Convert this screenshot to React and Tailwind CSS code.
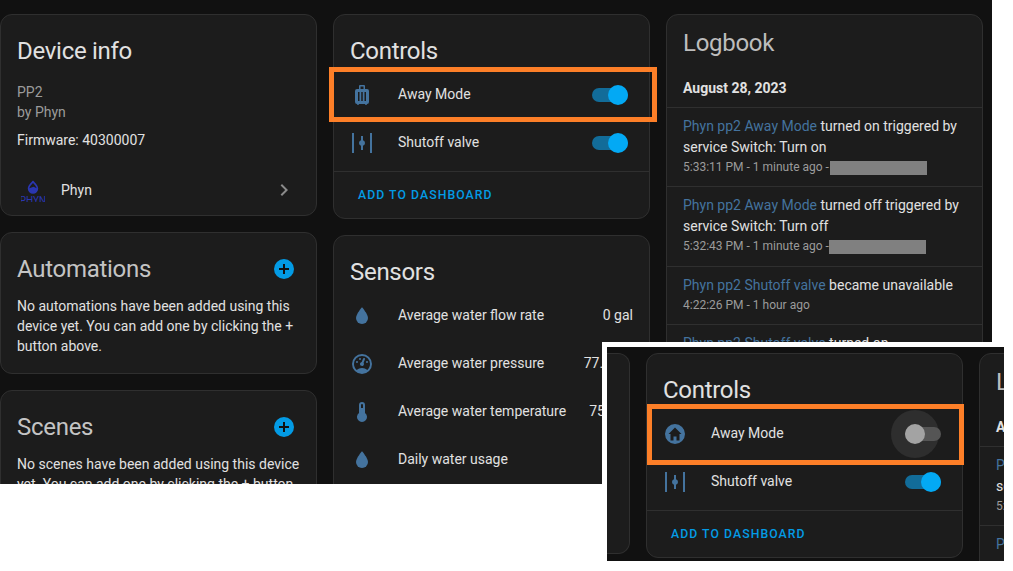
const P = {
  suitcase: "M17,6H15V3A1,1 0 0,0 14,2H10A1,1 0 0,0 9,3V6H7A2,2 0 0,0 5,8V19A2,2 0 0,0 7,21A1,1 0 0,0 8,22A1,1 0 0,0 9,21H15A1,1 0 0,0 16,22A1,1 0 0,0 17,21A2,2 0 0,0 19,19V8A2,2 0 0,0 17,6M9.5,18H8V9H9.5V18M12.75,18H11.25V9H12.75V18M16,18H14.5V9H16V18M13.5,6H10.5V3.5H13.5V6Z",
  valve: "M2,2H4V22H2V2M20,2H22V22H20V2M11,5H13V9.17A3,3 0 0,1 13,14.83V19H11V14.83A3,3 0 0,1 11,9.17V5Z",
  water: "M12,20A6,6 0 0,1 6,14C6,10 12,3.25 12,3.25C12,3.25 18,10 18,14A6,6 0 0,1 12,20Z",
  gauge: "M12,2A10,10 0 0,0 2,12A10,10 0 0,0 12,22A10,10 0 0,0 22,12A10,10 0 0,0 12,2M12,4A8,8 0 0,1 20,12C20,14.4 19,16.5 17.3,18C15.9,16.7 14,16 12,16C10,16 8.2,16.7 6.7,18C5,16.5 4,14.4 4,12A8,8 0 0,1 12,4M14,5.89C13.62,5.9 13.26,6.15 13.1,6.54L11.81,9.77L11.71,10C11,10.13 10.41,10.6 10.14,11.26C9.73,12.29 10.23,13.45 11.26,13.86C12.29,14.27 13.45,13.77 13.86,12.74C14.12,12.08 14,11.32 13.57,10.76L13.67,10.5L14.96,7.29L14.97,7.26C15.17,6.75 14.92,6.17 14.41,5.96C14.28,5.91 14.15,5.89 14,5.89M10,6A1,1 0 0,0 9,7A1,1 0 0,0 10,8A1,1 0 0,0 11,7A1,1 0 0,0 10,6M7,9A1,1 0 0,0 6,10A1,1 0 0,0 7,11A1,1 0 0,0 8,10A1,1 0 0,0 7,9M17,9A1,1 0 0,0 16,10A1,1 0 0,0 17,11A1,1 0 0,0 18,10A1,1 0 0,0 17,9Z",
  thermometer: "M15 13V5A3 3 0 0 0 9 5V13A5 5 0 1 0 15 13M12 4A1 1 0 0 1 13 5V8H11V5A1 1 0 0 1 12 4Z",
  home: "M12,2A10,10 0 0,0 2,12A10,10 0 0,0 12,22A10,10 0 0,0 22,12A10,10 0 0,0 12,2M12,5.5L18.5,12H16.5V18.5H13.5V14.5H10.5V18.5H7.5V12H5.5L12,5.5Z",
};

function Icon({ d }) {
  return (
    <svg viewBox="0 0 24 24" className="w-6 h-6 shrink-0 fill-[#44739e]">
      <path d={d} fillRule="evenodd" />
    </svg>
  );
}

function Card({ className = "", children }) {
  return (
    <div className={"w-[317px] shrink-0 rounded-xl border border-[#2f2f2f] bg-[#1c1c1c] overflow-hidden " + className}>
      {children}
    </div>
  );
}

function Toggle({ on }) {
  if (on) {
    return (
      <div className="relative w-9 h-5 mr-[5px] shrink-0 flex items-center">
        <div className="w-full h-[14px] rounded-full bg-[#126c99]" />
        <div className="absolute right-0 top-0 w-5 h-5 rounded-full bg-[#03a9f4]" />
      </div>
    );
  }
  return (
    <div className="relative w-9 h-5 mr-[5px] shrink-0 flex items-center">
      <div className="absolute -left-[14px] -top-[14px] w-12 h-12 rounded-full bg-[#2e2e2e]" />
      <div className="relative w-full h-[14px] rounded-full bg-[#555555]" />
      <div className="absolute left-0 top-0 w-5 h-5 rounded-full bg-[#a3a3a3]" />
    </div>
  );
}

function Row({ icon, label, children }) {
  return (
    <div className="h-12 px-4 flex items-center">
      <Icon d={icon} />
      <span className="ml-6 pb-[2px] flex-1 text-[14px] text-[#e1e1e1] whitespace-nowrap">{label}</span>
      {children}
    </div>
  );
}

function Value({ children }) {
  return <span className="pb-[2px] text-[14px] text-[#e1e1e1] whitespace-nowrap">{children}</span>;
}

function Title({ children, className = "" }) {
  return <h2 className={"text-[24px] leading-8 font-normal tracking-[-0.012em] " + className}>{children}</h2>;
}

function Controls({ awayOn, awayIcon }) {
  return (
    <Card className="h-[205px]">
      <div className="pt-5 px-4 pb-1">
        <Title className="text-[#e1e1e1]">Controls</Title>
      </div>
      <Row icon={awayIcon} label="Away Mode"><Toggle on={awayOn} /></Row>
      <Row icon={P.valve} label="Shutoff valve"><Toggle on /></Row>
      <div className="mt-1 border-t border-[#2f2f2f] h-12 pl-6 flex items-center text-[12.25px] font-medium tracking-[1.06px] text-[#039be5]">
        ADD TO DASHBOARD
      </div>
    </Card>
  );
}

function Entry({ name, text, time, redact, pad = "pb-[9px]" }) {
  return (
    <div className={"px-4 pt-2 border-b border-[#2f2f2f] " + pad}>
      <p className="text-[14px] leading-[21px] text-[#e1e1e1]">
        <span className="text-[#44739e]">{name}</span> {text}
      </p>
      {time && (
        <p className="text-[12px] leading-[19px] text-[#9b9b9b] flex items-center whitespace-nowrap">
          {time}
          {redact && <span className={"h-[14px] bg-[#808080] " + redact} />}
        </p>
      )}
    </div>
  );
}

function Logbook() {
  return (
    <Card className="h-[600px]">
      <div className="pt-3 px-4">
        <Title className="text-[#bdbdbd]">Logbook</Title>
      </div>
      <div className="mt-[19px] px-4 pb-[9px] border-b border-[#2f2f2f] text-[14px] leading-5 font-bold text-[#e1e1e1]">
        August 28, 2023
      </div>
      <Entry
        name="Phyn pp2 Away Mode"
        text="turned on triggered by service Switch: Turn on"
        time="5:33:11 PM - 1 minute ago -"
        redact="w-[97px] ml-[1px]"
      />
      <Entry
        name="Phyn pp2 Away Mode"
        text="turned off triggered by service Switch: Turn off"
        time="5:32:43 PM - 1 minute ago -"
        redact="w-[97px]"
        pad="pb-[10px]"
      />
      <Entry name="Phyn pp2 Shutoff valve" text="became unavailable" time="4:22:26 PM - 1 hour ago" />
      <Entry name="Phyn pp2 Shutoff valve" text="turned on" />
    </Card>
  );
}

function Plus() {
  return (
    <svg viewBox="0 0 20 20" className="w-5 h-5 shrink-0">
      <circle cx="10" cy="10" r="10" fill="#039be5" />
      <path d="M9 5h2v4h4v2h-4v4H9v-4H5V9h4z" fill="#111111" />
    </svg>
  );
}

function Listing({ title, children, className = "" }) {
  return (
    <Card className={className}>
      <div className="pt-5 pl-4 pr-[22px] flex items-center justify-between">
        <Title className="text-[#c4c4c4]">{title}</Title>
        <Plus />
      </div>
      <p className="mt-[11px] px-4 text-[14px] leading-5 text-[#e1e1e1]">{children}</p>
    </Card>
  );
}

function Logo() {
  return (
    <div className="w-6 h-6 mr-4 overflow-hidden flex flex-col items-center shrink-0">
      <svg viewBox="0 0 12 14" className="w-3 h-[14px] shrink-0 mt-[2px]">
        <path
          d="M6 .5C6 .5 .8 5.2 .8 8.5A5.2 5.2 0 0 0 11.2 8.5C11.2 5.2 6 .5 6 .5ZM6 3C7.4 4.3 9.4 6.6 9.6 8.3L6.6 6.7L2.4 8.3C2.6 6.6 4.6 4.3 6 3Z"
          fill="#2a36b1"
          fillRule="evenodd"
        />
      </svg>
      <span className="text-[10px] leading-[10px] mt-[2px] text-[#2a36b1] whitespace-nowrap">PHYN</span>
    </div>
  );
}

export default function App() {
  return (
    <div className="relative w-[1013px] h-[571px] overflow-hidden bg-white font-['Roboto',sans-serif]">
      <div className="relative w-[992px] h-[484px] overflow-hidden bg-[#111111] pt-[14px] flex gap-4">
        <div className="flex flex-col gap-4 shrink-0">
          <Card className="h-[202px]">
            <div className="pt-5 px-4">
              <Title className="text-[#e1e1e1]">Device info</Title>
              <p className="mt-[15px] text-[14px] leading-5 text-[#9b9b9b]">PP2</p>
              <p className="text-[14px] leading-5 text-[#9b9b9b]">by Phyn</p>
              <p className="mt-2 text-[14px] leading-5 text-[#e1e1e1]">Firmware: 40300007</p>
            </div>
            <div className="mt-4 h-12 pl-5 pr-[22px] flex items-center">
              <Logo />
              <span className="flex-1 text-[14px] text-[#e1e1e1]">Phyn</span>
              <svg viewBox="0 0 24 24" className="w-6 h-6 -mr-[2px] fill-[#8a8a8a]">
                <path d="M8.59,16.58L13.17,12L8.59,7.41L10,6L16,12L10,18L8.59,16.58Z" />
              </svg>
            </div>
          </Card>
          <Listing title="Automations" className="h-[142px]">
            No automations have been added using this device yet. You can add one by clicking the + button above.
          </Listing>
          <Listing title="Scenes" className="h-[200px]">
            No scenes have been added using this device yet. You can add one by clicking the + button above.
          </Listing>
        </div>
        <div className="flex flex-col gap-4 shrink-0">
          <Controls awayOn awayIcon={P.suitcase} />
          <Card className="h-[400px]">
            <div className="pt-5 px-4 pb-1">
              <Title className="text-[#e1e1e1]">Sensors</Title>
            </div>
            <Row icon={P.water} label="Average water flow rate"><Value>0 gal</Value></Row>
            <Row icon={P.gauge} label="Average water pressure"><Value>77.2 psi</Value></Row>
            <Row icon={P.thermometer} label="Average water temperature"><Value>75.2 °F</Value></Row>
            <Row icon={P.water} label="Daily water usage"><Value>0 gal</Value></Row>
          </Card>
        </div>
        <div className="shrink-0">
          <Logbook />
        </div>
        <div className="absolute left-[329px] top-[67px] w-[328px] h-[55px] border-[5px] border-[#fd7f28]" />
      </div>

      <div className="absolute left-[602px] top-[342px] w-[411px] h-[229px] bg-white pt-[5px] pl-[5px]">
        <div className="relative w-[397px] h-[214px] overflow-hidden bg-[#111111] pt-[6px] flex gap-4">
          <div className="w-[23px] h-[201px] shrink-0 rounded-r-xl border border-l-0 border-[#2f2f2f] bg-[#1c1c1c]" />
          <Controls awayIcon={P.home} />
          <Logbook />
          <div className="absolute left-[40px] top-[57px] w-[317px] h-[61px] border-[5px] border-[#fd7f28]" />
        </div>
      </div>
    </div>
  );
}
